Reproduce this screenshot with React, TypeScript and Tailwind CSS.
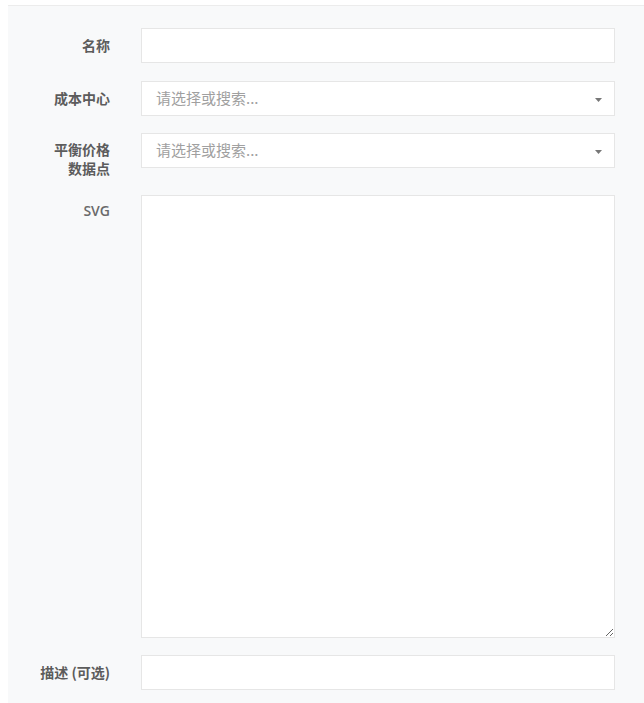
import React from "react";

const labelCls =
  "w-[102px] shrink-0 text-right text-[14px] font-bold text-[#5c5c5c]";

function Caret() {
  return (
    <svg width="7" height="4" viewBox="0 0 7 4" className="absolute right-[12px] top-[16px]">
      <path d="M0 0 L7 0 L3.5 4 Z" fill="#777" />
    </svg>
  );
}

export default function App() {
  return (
    <div
      className="min-h-[703px] bg-white pl-[8px] pt-[5px]"
      style={{ fontFamily: '"Noto Sans CJK SC", "Noto Sans", sans-serif' }}
    >
      <div className="min-h-[698px] border-t border-[#ececec] bg-[#f8f9fa] pt-[22px] pr-[29px]">
        {/* 名称 */}
        <div className="mb-[18px] flex items-start gap-[31px]">
          <div className={labelCls + " pt-[8px] leading-[18px]"}>名称</div>
          <input
            className="h-[35px] flex-1 border border-[#e6e6e6] bg-white px-[14px] text-[14px] outline-none"
            type="text"
          />
        </div>
        {/* 成本中心 */}
        <div className="mb-[17px] flex items-start gap-[31px]">
          <div className={labelCls + " pt-[8px] leading-[18px]"}>成本中心</div>
          <div className="relative flex h-[35px] flex-1 items-center border border-[#e6e6e6] bg-white px-[14px] text-[15px] text-[#a0a0a0]">
            请选择或搜索...
            <Caret />
          </div>
        </div>
        {/* 平衡价格数据点 */}
        <div className="mb-[18px] flex h-[44px] items-start gap-[31px]">
          <div className={labelCls + " flex flex-col items-end pt-[7px] leading-[19px]"}>
            <span>平衡价格</span>
            <span>数据点</span>
          </div>
          <div className="relative flex h-[35px] flex-1 items-center border border-[#e6e6e6] bg-white px-[14px] text-[15px] text-[#a0a0a0]">
            请选择或搜索...
            <Caret />
          </div>
        </div>
        {/* SVG */}
        <div className="mb-[17px] flex items-start gap-[31px]">
          <div
            className="w-[102px] shrink-0 pt-[7px] text-right text-[14px] font-semibold leading-[18px] text-[#6a6a6a]"
            style={{ fontFamily: '"Open Sans", "Noto Sans", sans-serif' }}
          >
            SVG
          </div>
          <textarea className="h-[443px] flex-1 resize-y border border-[#e6e6e6] bg-white px-[14px] py-[8px] text-[14px] outline-none" />
        </div>
        {/* 描述 */}
        <div className="flex items-start gap-[31px] pb-[13px]">
          <div className={labelCls + " pt-[8px] leading-[18px]"}>描述 (可选)</div>
          <input
            className="h-[35px] flex-1 border border-[#e6e6e6] bg-white px-[14px] text-[14px] outline-none"
            type="text"
          />
        </div>
      </div>
    </div>
  );
}
